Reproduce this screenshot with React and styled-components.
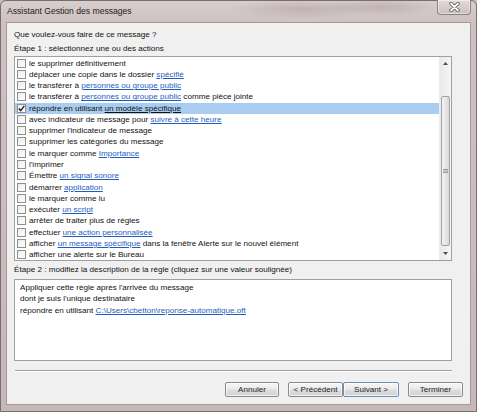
import React from "react";
import styled, { createGlobalStyle } from "styled-components";

const GlobalStyle = createGlobalStyle`
  html, body {
    margin: 0;
    padding: 0;
    background: #c9bcbc;
  }
  * {
    box-sizing: border-box;
  }
`;

const ACTIONS = [
  ["le supprimer définitivement"],
  ["déplacer une copie dans le dossier ", { link: "spécifié" }],
  ["le transférer à ", { link: "personnes ou groupe public" }],
  ["le transférer à ", { link: "personnes ou groupe public" }, " comme pièce jointe"],
  ["répondre en utilisant ", { link: "un modèle spécifique" }],
  ["avec indicateur de message pour ", { link: "suivre à cette heure" }],
  ["supprimer l'indicateur de message"],
  ["supprimer les catégories du message"],
  ["le marquer comme ", { link: "Importance" }],
  ["l'imprimer"],
  ["Émettre ", { link: "un signal sonore" }],
  ["démarrer ", { link: "application" }],
  ["le marquer comme lu"],
  ["exécuter ", { link: "un script" }],
  ["arrêter de traiter plus de règles"],
  ["effectuer ", { link: "une action personnalisée" }],
  ["afficher ", { link: "un message spécifique" }, " dans la fenêtre Alerte sur le nouvel élément"],
  ["afficher une alerte sur le Bureau"],
];

const SELECTED = 4;

const Window = styled.div`
  width: 477px;
  height: 412px;
  display: flex;
  flex-direction: column;
  padding: 0 5px 6px 5px;
  border: 1px solid #7a6d6d;
  border-radius: 6px 6px 0 0;
  background:
    radial-gradient(ellipse 70px 10px at 300px 8px, rgba(150, 135, 140, 0.35), transparent),
    radial-gradient(ellipse 60px 9px at 380px 6px, rgba(140, 125, 130, 0.3), transparent),
    linear-gradient(to bottom, #d8cece 0px, #cdc1c1 22px, #c6b8b8 100%);
  font-family: "Liberation Sans", Arial, sans-serif;
  color: #111;
`;

const TitleBar = styled.div`
  height: 21px;
  display: flex;
  align-items: flex-start;
  padding-left: 1px;
`;

const Title = styled.div`
  flex: 1;
  font-size: 8.6px;
  line-height: 21px;
  color: #1e1a1a;
`;

const CloseButton = styled.div`
  width: 34px;
  height: 15px;
  margin-top: -1px;
  display: flex;
  align-items: center;
  justify-content: center;
  border: 1px solid #8c8080;
  border-top: none;
  border-radius: 0 0 4px 4px;
  background: linear-gradient(to bottom, #e3dada, #cbbfbf);
  box-shadow: inset 0 0 0 1px rgba(255, 255, 255, 0.45);
`;

const Client = styled.div`
  flex: 1;
  display: flex;
  flex-direction: column;
  padding: 5px 7px 7px 7px;
  background: #f0f0f0;
  border: 1px solid #a4999b;
`;

const Label = styled.div`
  font-size: 8.1px;
  line-height: 14px;
  white-space: nowrap;
  margin-top: ${(p) => p.$top || 0}px;
`;

const ListBox = styled.div`
  width: 438px;
  height: 205px;
  display: flex;
  background: #fff;
  border: 1px solid #a0a0a0;
`;

const Rows = styled.div`
  flex: 1;
  padding-top: 0.5px;
  overflow: hidden;
`;

const Row = styled.div`
  height: 11.28px;
  display: flex;
  align-items: center;
  gap: 3px;
  padding-left: 2px;
  font-size: 8.1px;
  white-space: nowrap;
  background: ${(p) => (p.$selected ? "#a9cdf0" : "transparent")};
`;

const Box = styled.span`
  width: 9px;
  height: 9px;
  flex: none;
  display: flex;
  align-items: center;
  justify-content: center;
  border: 1px solid #8e8f8f;
  background: linear-gradient(135deg, #ececec, #ffffff);
`;

const Link = styled.span`
  color: ${(p) => (p.$selected ? "#111" : "#1f5cc0")};
  text-decoration: underline;
`;

const ScrollBar = styled.div`
  width: 12px;
  display: flex;
  flex-direction: column;
  align-items: stretch;
  background: linear-gradient(to right, #e9e9e9, #f6f6f6);
  border-left: 1px solid #ececec;
`;

const Arrow = styled.div`
  height: 13px;
  display: flex;
  align-items: center;
  justify-content: center;
`;

const Track = styled.div`
  height: ${(p) => p.$h}px;
`;

const Thumb = styled.div`
  height: ${(p) => p.$h}px;
  margin: 0 1px;
  display: flex;
  align-items: center;
  justify-content: center;
  border: 1px solid #a3a3a3;
  border-radius: 2px;
  background: linear-gradient(to right, #f3f3f3, #e6e6e6 50%, #d9d9d9);
`;

const DescBox = styled.div`
  width: 438px;
  height: 82px;
  margin-top: 2px;
  padding: 2px 5px;
  background: #fff;
  border: 1px solid #a0a0a0;
  font-size: 8.1px;
  line-height: 11.3px;
`;

const Separator = styled.div`
  margin: 9px 11px 0 1px;
  height: 2px;
  border-top: 1px solid #a0a0a0;
  border-bottom: 1px solid #ffffff;
`;

const ButtonRow = styled.div`
  margin-top: 10px;
  display: flex;
  justify-content: flex-end;
  gap: 9px;
`;

const ButtonGroup = styled.div`
  display: flex;
`;

const Button = styled.div`
  width: ${(p) => p.$w || 55}px;
  height: 15px;
  display: flex;
  align-items: center;
  justify-content: center;
  font-size: 8.1px;
  color: #222;
  border: 1px solid ${(p) => (p.$default ? "#6c8fb5" : "#8a8a8a")};
  border-radius: 2px;
  background: linear-gradient(to bottom, #f6f6f6 0%, #ebebeb 48%, #dddddd 52%, #d2d2d2 100%);
  box-shadow: inset 0 0 0 1px rgba(255, 255, 255, 0.7);
`;

const CloseIcon = () => (
  <svg width="11" height="10" viewBox="0 0 11 10">
    <path d="M2 1.5 L9 8.5 M9 1.5 L2 8.5" stroke="#5a4f52" strokeWidth="3.4" strokeLinecap="round" />
    <path d="M2 1.5 L9 8.5 M9 1.5 L2 8.5" stroke="#ffffff" strokeWidth="1.8" strokeLinecap="round" />
  </svg>
);

const Check = () => (
  <svg width="7" height="7" viewBox="0 0 7 7">
    <path d="M0.8 3.6 L2.7 5.6 L6.3 0.9" fill="none" stroke="#1c1c1c" strokeWidth="1.4" />
  </svg>
);

const Triangle = ({ up }) => (
  <svg width="5" height="3" viewBox="0 0 5 3">
    <path d={up ? "M0 3 L2.5 0 L5 3 Z" : "M0 0 L5 0 L2.5 3 Z"} fill="#4a4a4a" />
  </svg>
);

const Grip = () => (
  <svg width="5" height="4" viewBox="0 0 5 4">
    <path d="M0 0.5 H5 M0 2 H5 M0 3.5 H5" stroke="#8a8a8a" strokeWidth="0.8" />
  </svg>
);

const ActionRow = ({ parts, selected }) => (
  <Row $selected={selected}>
    <Box>{selected && <Check />}</Box>
    <span>
      {parts.map((p, i) =>
        typeof p === "string" ? (
          <React.Fragment key={i}>{p}</React.Fragment>
        ) : (
          <Link key={i} $selected={selected}>
            {p.link}
          </Link>
        )
      )}
    </span>
  </Row>
);

export default function App() {
  return (
    <>
      <GlobalStyle />
      <Window>
        <TitleBar>
          <Title>Assistant Gestion des messages</Title>
          <CloseButton>
            <CloseIcon />
          </CloseButton>
        </TitleBar>
        <Client>
          <Label>Que voulez-vous faire de ce message ?</Label>
          <Label>Étape 1 : sélectionnez une ou des actions</Label>
          <ListBox>
            <Rows>
              {ACTIONS.map((parts, i) => (
                <ActionRow key={i} parts={parts} selected={i === SELECTED} />
              ))}
            </Rows>
            <ScrollBar>
              <Arrow>
                <Triangle up />
              </Arrow>
              <Track $h={26} />
              <Thumb $h={150}>
                <Grip />
              </Thumb>
              <Track $h={1} />
              <Arrow>
                <Triangle />
              </Arrow>
            </ScrollBar>
          </ListBox>
          <Label $top={2}>
            Étape 2 : modifiez la description de la règle (cliquez sur une valeur soulignée)
          </Label>
          <DescBox>
            <div>Appliquer cette règle après l'arrivée du message</div>
            <div>dont je suis l'unique destinataire</div>
            <div>
              répondre en utilisant <Link>C:\Users\cbetton\reponse-automatique.oft</Link>
            </div>
          </DescBox>
          <Separator />
          <ButtonRow>
            <Button $w={54}>Annuler</Button>
            <ButtonGroup>
              <Button>&lt; Précédent</Button>
              <Button $w={56} $default>
                Suivant &gt;
              </Button>
            </ButtonGroup>
            <Button>Terminer</Button>
          </ButtonRow>
        </Client>
      </Window>
    </>
  );
}
